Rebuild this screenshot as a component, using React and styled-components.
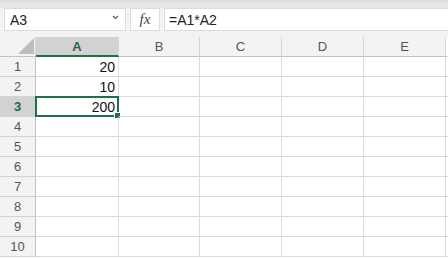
import React from 'react';
import styled, { createGlobalStyle } from 'styled-components';

const Global = createGlobalStyle`
  html, body { margin: 0; padding: 0; background: #fff; overflow: hidden; }
  body { font-family: "Liberation Sans", Arial, sans-serif; }
`;

const Window = styled.div`
  width: 448px;
  height: 259px;
  display: flex;
  flex-direction: column;
  background: #f3f3f3;
  overflow: hidden;
`;

const TopStrip = styled.div`
  height: 7px;
  background: linear-gradient(#dedede, #e9e9e9);
  border-bottom: 1px solid #e2e2e2;
`;

const FormulaBar = styled.div`
  display: flex;
  align-items: stretch;
  height: 23px;
  padding: 0 0 0 4px;
  gap: 4px;
`;

const Box = styled.div`
  background: #fff;
  border: 1px solid #dcdcdc;
  display: flex;
  align-items: center;
  box-sizing: border-box;
`;

const NameBox = styled(Box)`
  width: 122px;
  padding: 0 6px 0 5px;
  justify-content: space-between;
  font-size: 14px;
  color: #222;
`;

const Chevron = styled.svg`
  width: 7px;
  height: 5px;
  margin-top: -5px;
`;

const FxBox = styled(Box)`
  width: 30px;
  justify-content: center;
  font-family: "Liberation Serif", "DejaVu Serif", serif;
  font-style: italic;
  font-size: 15px;
  color: #444;
`;

const Input = styled(Box)`
  flex: 1;
  border-right: none;
  padding-left: 4px;
  font-size: 14px;
  color: #222;
`;

const Gap = styled.div`
  height: 6px;
`;

const Grid = styled.div`
  display: grid;
  grid-template-columns: 36px 83px 81px 82px 82px 82px 2px;
  grid-auto-rows: 20px;
  background: #fff;
  flex: 1;
`;

const Corner = styled.div`
  background: #f3f3f3;
  border-right: 1px solid #d4d4d4;
  border-bottom: 1px solid #c2c2c2;
  position: relative;
  box-sizing: border-box;
`;

const CornerTri = styled.div`
  position: absolute;
  right: 1px;
  bottom: 2px;
  width: 0;
  height: 0;
  border-left: 16px solid transparent;
  border-bottom: 16px solid #bdbdbd;
`;

const ColHead = styled.div`
  box-sizing: border-box;
  display: flex;
  align-items: center;
  justify-content: center;
  font-size: 13px;
  background: ${p => (p.$active ? '#d2d2d2' : '#f3f3f3')};
  color: ${p => (p.$active ? '#1e6b3f' : '#555')};
  font-weight: ${p => (p.$active ? 'bold' : 'normal')};
  border-right: 1px solid #d4d4d4;
  border-bottom: ${p => (p.$active ? '2px solid #1e7145' : '1px solid #c2c2c2')};
  padding-top: ${p => (p.$active ? '1px' : '0')};
`;

const RowHead = styled.div`
  box-sizing: border-box;
  display: flex;
  align-items: center;
  justify-content: center;
  font-size: 13px;
  background: ${p => (p.$active ? '#d2d2d2' : '#f3f3f3')};
  color: ${p => (p.$active ? '#1e6b3f' : '#555')};
  font-weight: ${p => (p.$active ? 'bold' : 'normal')};
  border-right: 1px solid #c2c2c2;
  border-bottom: 1px solid #d4d4d4;
`;

const Cell = styled.div`
  box-sizing: border-box;
  position: relative;
  display: flex;
  align-items: center;
  justify-content: flex-end;
  padding-right: 3px;
  font-size: 14px;
  color: #111;
  border-right: 1px solid #dadada;
  border-bottom: 1px solid #dadada;
`;

const Selection = styled.div`
  position: absolute;
  left: -1px;
  top: -1px;
  right: -1px;
  bottom: -1px;
  border: 2px solid #1e7145;
  pointer-events: none;
`;

const Handle = styled.div`
  position: absolute;
  right: -4px;
  bottom: -4px;
  width: 5px;
  height: 5px;
  background: #1e7145;
  border: 1px solid #fff;
`;

const Edge = styled.div`
  border-bottom: 1px solid #dadada;
`;

const cols = ['A', 'B', 'C', 'D', 'E'];
const values = { 1: '20', 2: '10', 3: '200' };

export default function App() {
  return (
    <>
      <Global />
      <Window>
        <TopStrip />
        <FormulaBar>
          <NameBox>
            A3
            <Chevron viewBox="0 0 7 5">
              <path d="M1 1 L3.5 3.5 L6 1" fill="none" stroke="#555" strokeWidth="1.1" />
            </Chevron>
          </NameBox>
          <FxBox>fx</FxBox>
          <Input>=A1*A2</Input>
        </FormulaBar>
        <Gap />
        <Grid>
          <Corner>
            <CornerTri />
          </Corner>
          {cols.map(c => (
            <ColHead key={c} $active={c === 'A'}>
              {c}
            </ColHead>
          ))}
          <Edge />
          {Array.from({ length: 10 }, (_, i) => i + 1).map(r => (
            <React.Fragment key={r}>
              <RowHead $active={r === 3}>{r}</RowHead>
              {cols.map(c => (
                <Cell key={c}>
                  {c === 'A' && values[r]}
                  {c === 'A' && r === 3 && (
                    <Selection>
                      <Handle />
                    </Selection>
                  )}
                </Cell>
              ))}
              <Edge />
            </React.Fragment>
          ))}
        </Grid>
      </Window>
    </>
  );
}
